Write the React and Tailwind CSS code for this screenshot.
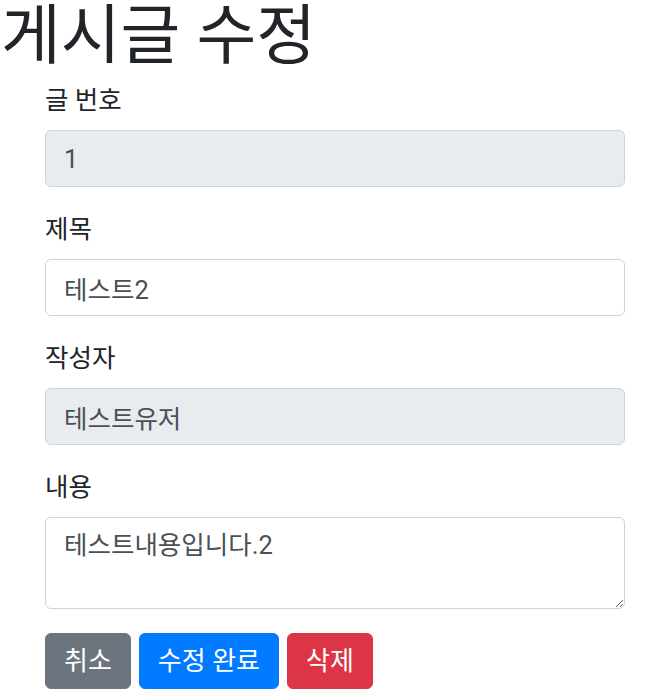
export default function App() {
  const font = { fontFamily: 'Roboto, "Noto Sans CJK KR", sans-serif' };
  const inputBase =
    "block w-full h-[57px] px-[18px] py-[9px] text-[25.5px] leading-[37px] text-[#495057] border border-[#ced4da] rounded-[6px]";
  const btn =
    "h-[56px] px-[18px] text-[26px] leading-[36px] text-white rounded-[6px] border";
  return (
    <div className="bg-white text-[#212529]" style={font}>
      <h1 className="text-[65px] leading-[72px] font-normal mb-[10px] pl-[1px] text-[#212529]">게시글 수정</h1>
      <form className="ml-[45px] w-[580px] text-[25.5px] leading-[36px]">
        <div className="mb-[24px]">
          <label className="block mb-[12px]">글 번호</label>
          <input className={inputBase + " bg-[#e9ecef]"} value="1" disabled readOnly />
        </div>
        <div className="mb-[24px]">
          <label className="block mb-[12px]">제목</label>
          <input className={inputBase + " bg-white"} defaultValue="테스트2" />
        </div>
        <div className="mb-[24px]">
          <label className="block mb-[12px]">작성자</label>
          <input className={inputBase + " bg-[#e9ecef]"} value="테스트유저" disabled readOnly />
        </div>
        <div className="mb-[24px]">
          <label className="block mb-[12px]">내용</label>
          <textarea
            rows={2}
            className="block w-full h-[92px] px-[18px] py-[9px] text-[25.5px] leading-[36px] text-[#495057] bg-white border border-[#ced4da] rounded-[6px]"
            defaultValue="테스트내용입니다.2"
          />
        </div>
        <div className="flex gap-[8px]">
          <button type="button" className={btn + " bg-[#6c757d] border-[#6c757d]"}>취소</button>
          <button type="button" className={btn + " bg-[#007bff] border-[#007bff]"}>수정 완료</button>
          <button type="button" className={btn + " bg-[#dc3545] border-[#dc3545]"}>삭제</button>
        </div>
      </form>
    </div>
  );
}
